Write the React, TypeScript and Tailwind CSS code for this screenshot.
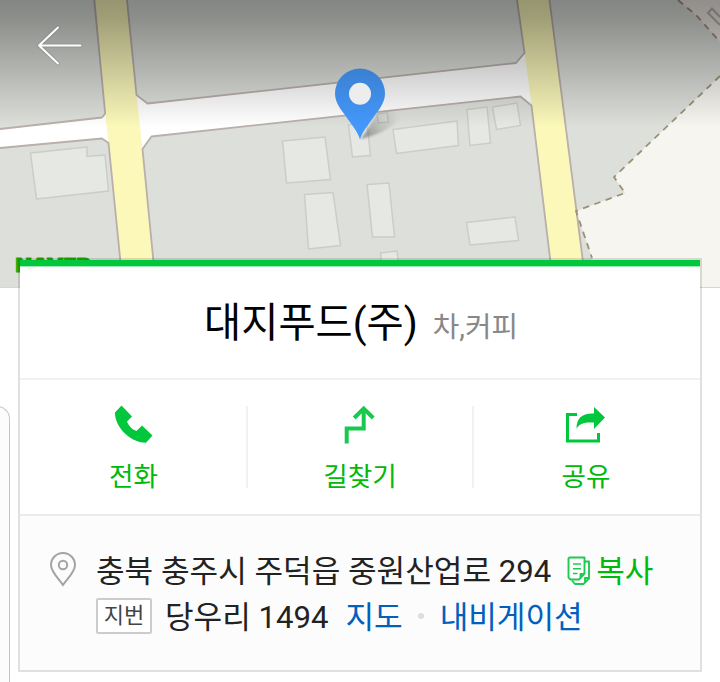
import type { ReactNode } from "react";

const buildings = [
  "30.5,153 87,147 87,156.500 105,155 108.500,191 36.500,199",
  "282.500,141 325,137 330.500,179.500 286.500,183",
  "304.500,194.500 333,192.500 340.500,245.500 308.500,249",
  "348.500,125 367,122 370.500,155.500 352.500,157",
  "377,114 387,112.500 388.500,122 378.500,123",
  "393,129.500 457,121 458.500,145.500 396.500,153.500",
  "367,184.500 389,183 394.500,237 372.500,237",
  "467,109.500 487,107 490.500,143 470,145.500",
  "492.500,107 517,103 520.500,125.500 496.500,129.500",
  "466.500,222.500 515,217 518.500,240.500 470,245",
  "380.500,253 397,251 399,266 382,266",
];

function MapView() {
  return (
    <svg className="block h-[288px] w-[720px]" viewBox="0 0 720 288">
      <defs>
        <linearGradient id="shade" x1="0" y1="0" x2="0" y2="1">
          <stop offset="0" stopColor="#000" stopOpacity=".4" />
          <stop offset=".15" stopColor="#000" stopOpacity=".36" />
          <stop offset="1" stopColor="#000" stopOpacity="0" />
        </linearGradient>
        <linearGradient id="pin" x1="0" y1="0" x2="0" y2="1">
          <stop offset="0" stopColor="#3a80d2" />
          <stop offset=".8" stopColor="#4398fa" />
          <stop offset="1" stopColor="#4499fd" />
        </linearGradient>
        <linearGradient id="cast" gradientUnits="userSpaceOnUse" x1="361" y1="139" x2="399" y2="113">
          <stop offset="0" stopColor="#444" stopOpacity=".55" />
          <stop offset=".5" stopColor="#555" stopOpacity=".22" />
          <stop offset="1" stopColor="#555" stopOpacity="0" />
        </linearGradient>
        <filter id="soft" x="-20%" y="-20%" width="140%" height="140%">
          <feGaussianBlur stdDeviation="1" />
        </filter>
      </defs>
      <rect width="720" height="288" fill="#dcdfda" />
      {/* open ground east of the district boundary */}
      <path d="M678 0 L697 16 L720 42 V0Z" fill="#f1ece8" />
      <path d="M720 76 L614 177 L625 193 L576 211 L592 258 L602 288 H720Z" fill="#f6f5f0" />
      {/* roads */}
      <path d="M0 129 L102 117.500 L106 113 L136 95 L147 103.500 L516 63 L525 53 L540 100 L531 105 L520 96.500 L151 136.500 L142.500 149 L112 150 L108 142 L102 138.500 L0 148Z" fill="#fff" />
      <path d="M95.500 0 H126.500 L136.500 95 L142.500 149 L153.500 262 V288 H122 L120.500 262 L108.500 142 L105 113Z" fill="#fbf8ba" />
      <path d="M517.500 0 H549.500 L583 262 V288 H553 L550.500 262 L531.500 105Z" fill="#fbf8ba" />
      <g fill="none" stroke="#b9afab" strokeWidth="1.8" strokeLinejoin="round">
        <path d="M0 129 L102 117.500 L105.200 113.500 L94.200 0" />
        <path d="M0 148 L102 138.500 L108.500 143 L120.500 262" />
        <path d="M127 0 L136.500 95 L147.500 103.500 L516 63 L524.500 53 L517 0" />
        <path d="M153.500 262 L142.500 149 L151.500 136.500 L520.500 96.500 L531.500 105.500 L550.500 262" />
        <path d="M549.500 0 L583 262" />
      </g>
      <g fill="#e6e8e3" stroke="#cacdc8" strokeWidth="1.5">
        {buildings.map((points) => (
          <polygon key={points} points={points} />
        ))}
      </g>
      <path d="M720 17 L712 8.500 L708 13 L720 25" fill="none" stroke="#bab4b1" strokeWidth="2" />
      <g fill="none" stroke="#9c9176" strokeWidth="1.8" strokeDasharray="6.500 5.500">
        <path d="M678 0 L697 16 L720 42" />
        <path d="M720 76 L614 177 L625 193 L576 211 L592 258" />
      </g>
      <rect width="720" height="127" fill="url(#shade)" />
      <path d="M361 139 L378 113 Q396 108 402 113 Q396 130 361 139Z" fill="url(#cast)" filter="url(#soft)" />
      <path d="M360 139.500 C358 132 352 125 340.500 109 C337 103.500 335 99 335 93.500 A25 25 0 0 1 385 93.500 C385 99 383 103.500 379.500 109 C368 125 362 132 360 139.500Z" fill="url(#pin)" />
      <circle cx="360" cy="93.800" r="11" fill="#ededed" />
      <g fill="none" strokeLinecap="round" strokeLinejoin="round">
        <path d="M58 27.500 L39 45.500 L58 63.500 M39 45.500 H80.500" stroke="#777" strokeOpacity=".35" strokeWidth="4" />
        <path d="M58 27.500 L39 45.500 L58 63.500 M39 45.500 H80.500" stroke="#fff" strokeWidth="2" />
      </g>
      <text x="15.500" y="272" textLength="75" lengthAdjust="spacingAndGlyphs" stroke="#24ad00" strokeWidth="1" className="fill-[#24ad00] text-[19px] font-black" style={{ fontFamily: "Inter, sans-serif" }}>
        NAVER
      </text>
      <path d="M0 287.500 H720" stroke="#d4d7df" />
    </svg>
  );
}

const PhoneIcon = () => (
  <svg className="h-[42px] w-[42px]" viewBox="0 3 42 42" fill="#00c73c" overflow="visible">
    <path d="M8.500 2.500 L19 13.500 L14 18.500 C15.500 22.500 19 26.500 23.500 28 L29 22.500 L39.500 32.500 L33 39.800 C16 39.500 1.500 22.500 2 9.500Z" />
  </svg>
);

const RouteIcon = () => (
  <svg className="h-[42px] w-[42px]" viewBox="0.300 3 42 42" fill="none" stroke="#18c94e" strokeWidth="4" overflow="visible">
    <path d="M8 40.500 V25.500 H25 V6" />
    <path d="M15.500 15 L25 5.500 L34.500 15" />
  </svg>
);

const ShareIcon = () => (
  <svg className="h-[42px] w-[42px]" viewBox="0 3 42 42" overflow="visible">
    <path d="M12 11.500 H2.500 V38 H33.500 V30" fill="none" stroke="#00c73c" strokeWidth="3" />
    <path d="M29 4 L40 14.500 L29 26 V19.500 C20 19 14 20 11.500 26 C11.500 15 17 10 29 10.500Z" fill="#00c73c" />
  </svg>
);

const CopyIcon = () => (
  <svg className="-mt-[4px] h-[29px] w-[24px]" viewBox="0 0 24 29" fill="none" stroke="#1fca54" strokeWidth="1.900" strokeLinejoin="round">
    <path d="M2.500 1.500 H17.500 V17.500 L12 23.500 H3.500 L1.500 21.500 V2.500Z M17.500 18 H13.500 V23" />
    <path d="M18 5.500 H22 V22.500 L16.500 28 H8 L5 24.500 M22 22 H18 V27" />
    <path d="M6 8 H14 M6 12.700 H14 M6 17.400 H10.500" strokeWidth="1.500" />
  </svg>
);

const PlaceIcon = () => (
  <svg className="h-[36px] w-[28px]" viewBox="0 0 28 36" fill="none" stroke="#a3a3a3" strokeWidth="2">
    <path d="M14 34 C10 28 2 21 2 14 A12 12 0 0 1 26 14 C26 21 18 28 14 34Z" />
    <circle cx="14" cy="14" r="4.200" />
  </svg>
);

function Action({ label, children }: { label: string; children: ReactNode }) {
  return (
    <button className="flex h-full w-[226px] flex-col items-center first:w-[227px] last:w-[226px]">
      {children}
      <span className="mt-[10px] text-[26.600px] leading-[38px] text-[#00b90b]">{label}</span>
    </button>
  );
}

const Divider = () => <span className="-mx-px h-[82px] w-[2px] bg-[#f2f2f2]" />;

export default function App() {
  return (
    <div className="relative h-[682px] w-[720px] overflow-hidden bg-white" style={{ fontFamily: 'Roboto, "Noto Sans CJK KR", sans-serif' }}>
      <MapView />
      <div className="absolute -left-4 top-[406px] h-[300px] w-[26px] rounded-tr-[13px] border-r-[1.500px] border-t border-[#c5c5c5] bg-[#fcfcfc]" />
      <main className="relative -mt-[30px] ml-[18px] h-[414px] w-[684px] border-2 border-black/12 bg-white bg-clip-padding">
        <div className="h-[6px] bg-[#00c73c]" />
        <div className="h-px bg-[#99e9b1]" />
        <header className="flex h-[111px] items-baseline justify-center gap-[15px] pl-[2px] pt-[29px]">
          <h1 className="text-[40.400px] leading-[56px] text-black">대지푸드(주)</h1>
          <span className="text-[28.800px] leading-[40px] text-[#888]">차,커피</span>
        </header>
        <div className="h-[2px] bg-[#f1f1f1]" />
        <nav className="flex h-[134px] items-start pt-[26px]">
          <Action label="전화"><PhoneIcon /></Action>
          <Divider />
          <Action label="길찾기"><RouteIcon /></Action>
          <Divider />
          <Action label="공유"><ShareIcon /></Action>
        </nav>
        <section className="flex h-[156px] border-t-2 border-[#ebebeb] bg-[#fcfcfc] pl-[29px] pt-[35px]">
          <PlaceIcon />
          <div className="ml-[19px] flex flex-col text-[31.100px] leading-[46px] text-[#222]">
            <div className="-mt-[2px] flex h-[46px] items-center whitespace-nowrap">
              <span>충북 충주시 주덕읍 중원산업로 294</span>
              <button className="ml-[16px] flex items-center gap-[5px] text-[#00b90b]">
                <CopyIcon />
                <span>복사</span>
              </button>
            </div>
            <div className="flex h-[46px] items-center whitespace-nowrap">
              <span className="-mt-[4px] h-[36px] w-[56px] rounded-[2px] border-2 border-[#ccc] bg-white text-center text-[22px] leading-[31px] text-[#444]">지번</span>
              <span className="ml-[13px]">당우리 1494</span>
              <a className="ml-[17px] text-[#0060bc]">지도</a>
              <span className="-mt-[4px] ml-[15px] h-[6px] w-[6px] rounded-full bg-[#ddd]" />
              <a className="ml-[16px] text-[#0060bc]">내비게이션</a>
            </div>
          </div>
        </section>
      </main>
    </div>
  );
}
